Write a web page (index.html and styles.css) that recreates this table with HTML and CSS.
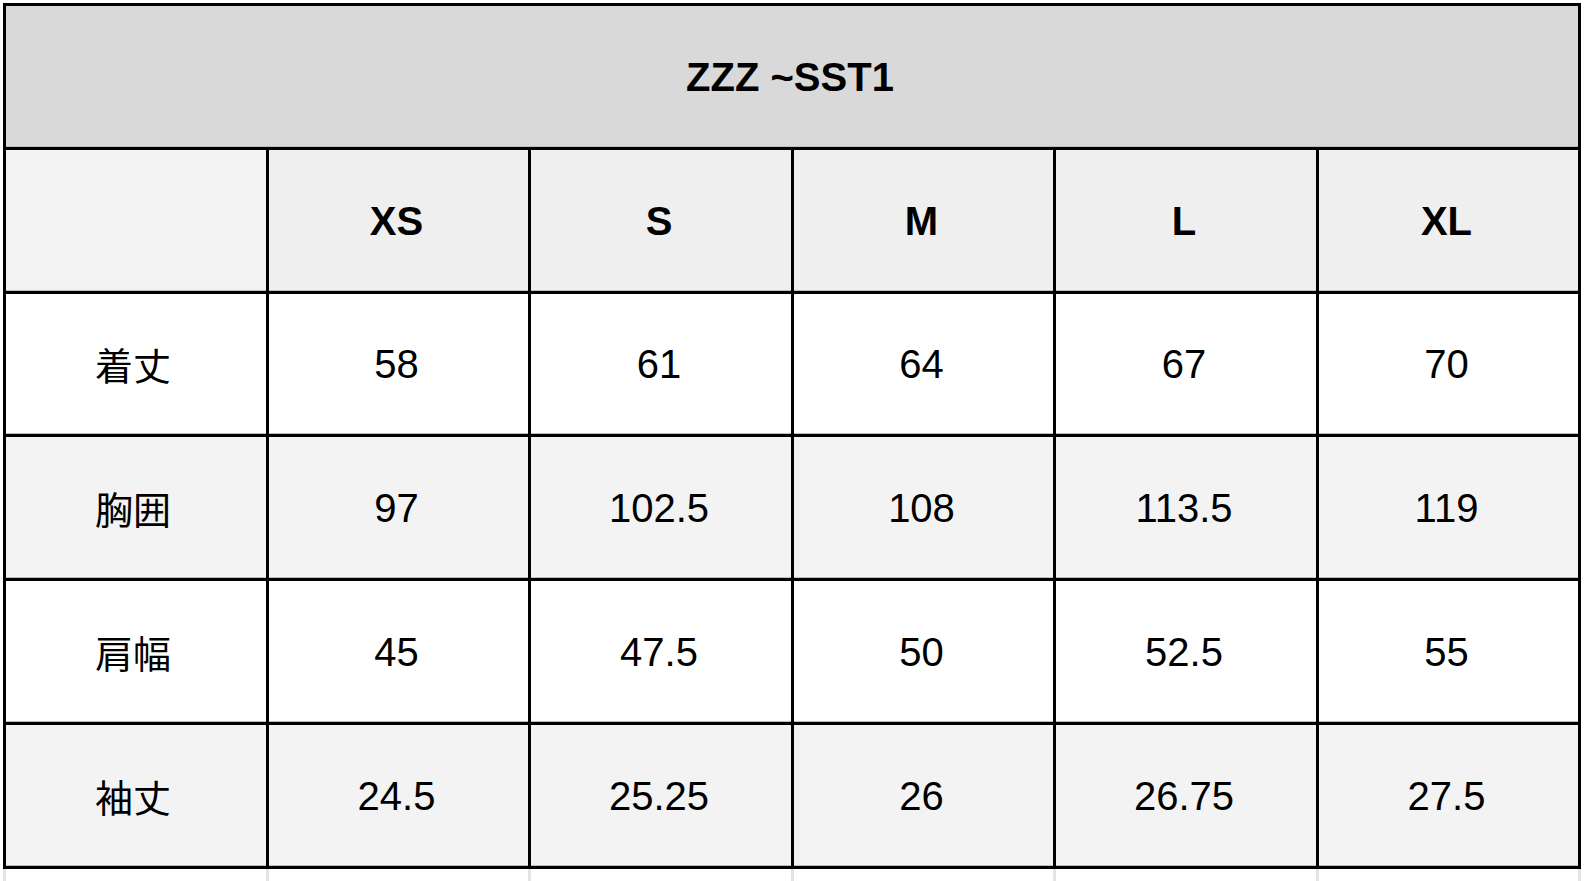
FILE: index.html
```html
<!DOCTYPE html>
<html lang="ja">
<head>
<meta charset="utf-8">
<title>ZZZ ~SST1</title>
<link rel="stylesheet" href="styles.css">
</head>
<body>
<div class="sheet">
  <div class="table">
    <div class="cell title">ZZZ ~SST1</div>

    <div class="cell size corner"></div>
    <div class="cell size">XS</div>
    <div class="cell size">S</div>
    <div class="cell size">M</div>
    <div class="cell size">L</div>
    <div class="cell size">XL</div>

    <div class="cell odd label">着丈</div>
    <div class="cell odd">58</div>
    <div class="cell odd">61</div>
    <div class="cell odd">64</div>
    <div class="cell odd">67</div>
    <div class="cell odd">70</div>

    <div class="cell even label">胸囲</div>
    <div class="cell even">97</div>
    <div class="cell even">102.5</div>
    <div class="cell even">108</div>
    <div class="cell even">113.5</div>
    <div class="cell even">119</div>

    <div class="cell odd label">肩幅</div>
    <div class="cell odd">45</div>
    <div class="cell odd">47.5</div>
    <div class="cell odd">50</div>
    <div class="cell odd">52.5</div>
    <div class="cell odd">55</div>

    <div class="cell even label">袖丈</div>
    <div class="cell even">24.5</div>
    <div class="cell even">25.25</div>
    <div class="cell even">26</div>
    <div class="cell even">26.75</div>
    <div class="cell even">27.5</div>
  </div>
  <div class="grid-tail">
    <div class="tail"></div>
    <div class="tail"></div>
    <div class="tail"></div>
    <div class="tail"></div>
    <div class="tail"></div>
    <div class="tail"></div>
  </div>
</div>
</body>
</html>
```

FILE: styles.css
```css
html, body {
  margin: 0;
  padding: 0;
  background: #ffffff;
}

body {
  font-family: "Liberation Sans", Arial, "Noto Sans CJK JP", sans-serif;
  color: #000000;
  overflow: hidden;
}

.sheet {
  padding: 3px 0 0 3px;
}

.table {
  display: grid;
  grid-template-columns: 263px 262px 263px 262px 263px 262px;
  grid-template-rows: 144px 144px 143px 144px 144px 144px;
  width: max-content;
  border-right: 3px solid #000000;
  border-bottom: 3px solid #000000;
}

.cell {
  border-left: 3px solid #000000;
  border-top: 3px solid #000000;
  display: flex;
  align-items: center;
  justify-content: center;
  font-size: 40px;
  line-height: 1;
  padding-right: 4px;
  box-shadow: inset 0 -1px 0 #bdbdbd;
}

.title {
  grid-column: 1 / span 6;
  background: #d9d9d9;
  font-weight: bold;
}

.size {
  background: #efefef;
  font-weight: bold;
}

.corner {
  background: #f3f3f3;
}

.odd {
  background: #ffffff;
}

.even {
  background: #f3f3f3;
}

.label {
  font-family: "Noto Sans CJK JP", "Liberation Sans", sans-serif;
  font-size: 38px;
  padding-right: 6px;
}

.grid-tail {
  display: grid;
  grid-template-columns: 263px 262px 263px 262px 263px 262px;
  width: max-content;
  height: 12px;
  border-right: 3px solid #e3e3e3;
}

.tail {
  border-left: 3px solid #e3e3e3;
}
```
